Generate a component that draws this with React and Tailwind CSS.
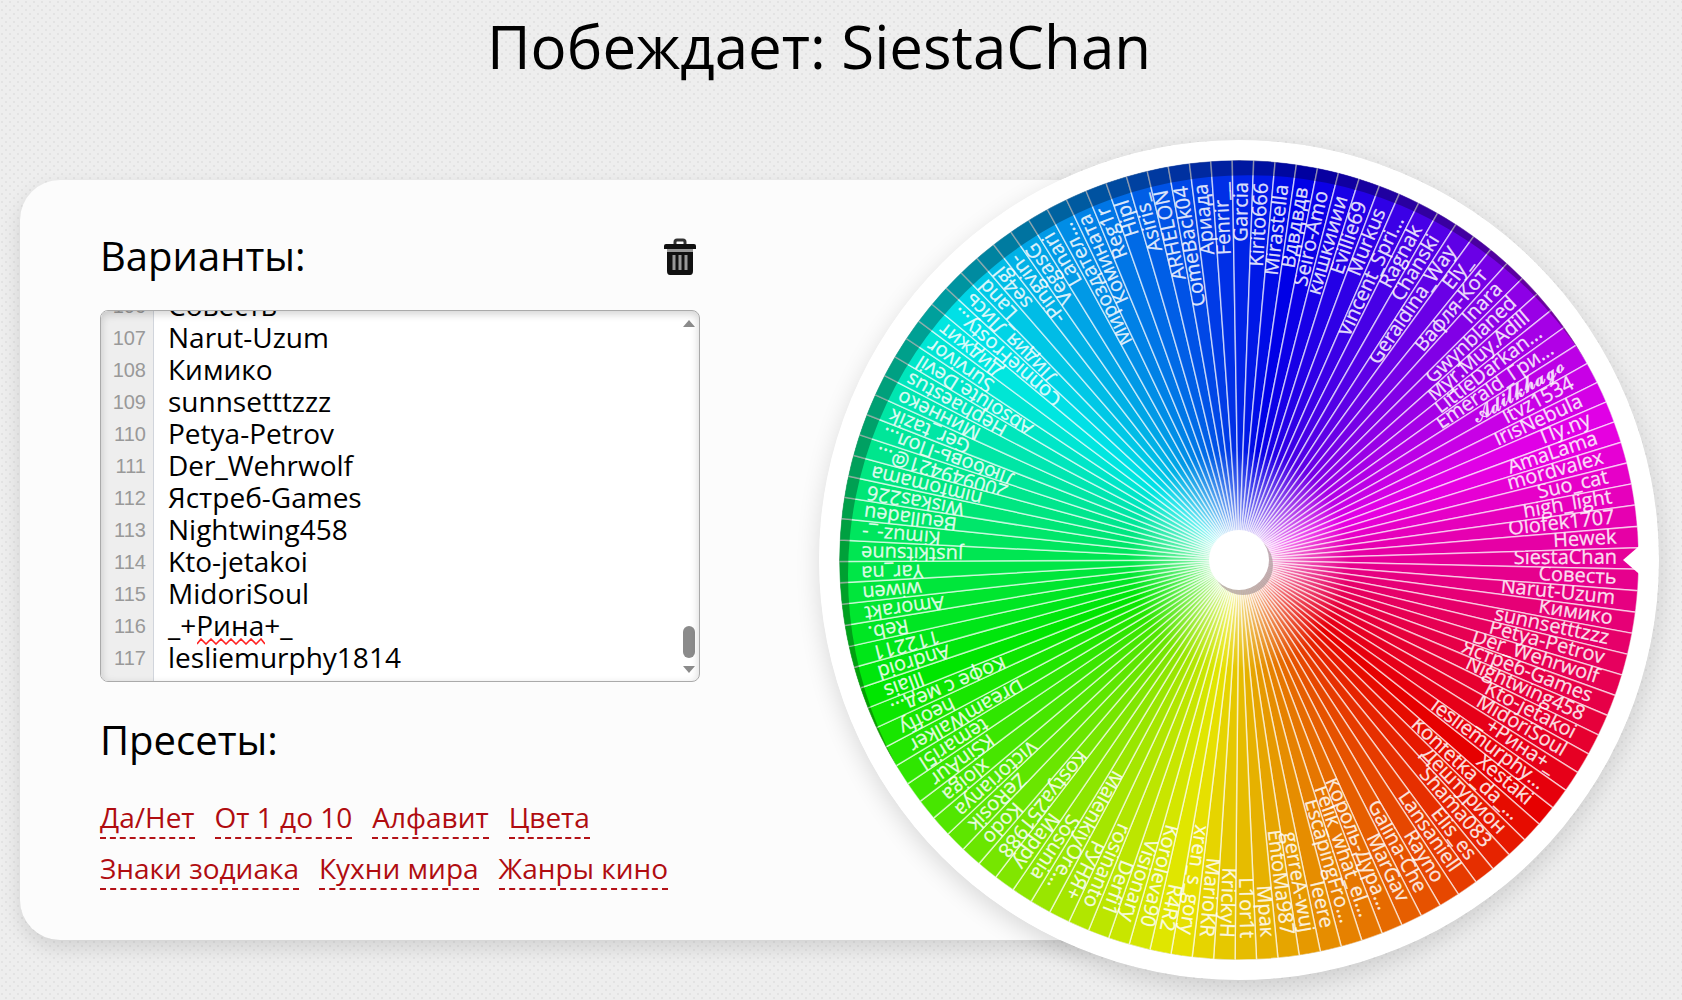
import { useLayoutEffect, useRef, useState } from "react";

const NAMES = [
  "Xestaki", "Konfetka_da_...", "Дештурион", "Shama083", "Elis_es", "Lansaniell", "Rayno",
  "Galina-Che", "MarGav", "Король-Дура...", "Felik_what_el...", "EscapingFro...", "Ieere",
  "gerreA-wuj", "EntoMa987", "Мрак", "L1or1t", "KrickyH", "MarioKR", "xren_s_gory", "R4R2",
  "Koroleva90", "Visionary", "Derfi1", "rosinanto", "РУНЯ+", "MalenkiyOre...", "Sosunia",
  "Mappy", "Kostya251988", "Kodo", "ZeRosik", "Victorianya", "xloiga", "KSinAur", "temari5l",
  "DreamWalker", "heoffy", "Кофе с мед...", "Illais", "Android", "112211", "Reb.", "Amorakt",
  "wiwen", "Yar_na", "justkitsune", "Kimuz-_-", "Beulladeu", "Wiskas226", "nimfomama",
  "200949421@...", "Любовь-Пол...", "Ger_tazik", "Миннеко", "Hephaestus", "Absolute.Devil",
  "Survivor", "Диджит", "ConnieFrosty...", "Лидия_Лись", "Land", "se4gl", "-Pingvin-",
  "VegasG", "Lanari", "Мироздател...", "Комината", "Reg1r", "Hipl", "Asiris_", "ARHELON",
  "ComeBack04", "Ариада", "Fenrir__", "Garcia", "Kirito666", "Mirastella", "Вдвдвдв",
  "Seiro-Amo", "кишкииии", "Evillie69", "Murkus", "Vincent_Spri...", "Ragnak", "Chanski",
  "Geraldina_Way", "Ely_", "Вафля-Кот", "Inara", "Gwynblaned", "Myr.Muy.Adill",
  "LittleDarkan...", "Emerald_Гри...", "𝓐𝓭𝓲𝓵𝓴𝓱𝓪𝓰𝓸", "Itvz1534", "IrisNebula", "Пу.ny",
  "AmaLama", "mordvalex", "Suo_cat", "high_light", "Olofek1707", "Hewek", "SiestaChan",
  "Совесть", "Narut-Uzum", "Кимико", "sunnsetttzzz", "Petya-Petrov", "Der_Wehrwolf",
  "Ястреб-Games", "Nightwing458", "Kto-jetakoi", "MidoriSoul", "_+Рина+_", "lesliemurphy1814",
];

const PRESETS = ["Да/Нет", "От 1 до 10", "Алфавит", "Цвета", "Знаки зодиака", "Кухни мира", "Жанры кино"];

const WINNER = NAMES.indexOf("SiestaChan");
const STEP = 360 / NAMES.length;
const R = 400;
const HALF = (STEP / 2) * (Math.PI / 180);
const EDGE_X = R * Math.cos(HALF);
const EDGE_Y = R * Math.sin(HALF);

const LINE = 32;
const VISIBLE_LINES = 12;

const angleOf = (i) => (i - WINNER) * STEP - 0.2;

const wheelLabel = (name) => {
  const chars = [...name];
  if (chars.length <= 15 || name.endsWith("...")) return name;
  return chars.slice(0, 12).join("") + "...";
};

function Wheel() {
  return (
    <svg viewBox="-420 -420 840 840" className="block w-full rounded-full shadow-[0_8px_24px_rgba(0,0,0,0.14)]">
      <defs>
        <clipPath id="label-area">
          <path d={`M0 0L${EDGE_X} ${-EDGE_Y}V200H0Z`} />
        </clipPath>
        <clipPath id="disc">
          <circle r={R} />
        </clipPath>
        <radialGradient id="glow">
          <stop offset="0.25" stopColor="#fff" stopOpacity="0.6" />
          <stop offset="1" stopColor="#fff" stopOpacity="0" />
        </radialGradient>
      </defs>
      <circle r="420" fill="#fff" />
      {NAMES.map((name, i) => (
        <path
          key={name}
          d={`M0 0L${EDGE_X} ${-EDGE_Y}A${R} ${R} 0 0 1 ${EDGE_X} ${EDGE_Y}Z`}
          transform={`rotate(${angleOf(i)})`}
          fill={`hsl(${(i * 360) / NAMES.length} 100% 45%)`}
          stroke="#fff"
          strokeOpacity="0.6"
          strokeWidth="1.5"
        />
      ))}
      <circle r="110" fill="url(#glow)" />
      {NAMES.map((name, i) => (
        <g key={name} transform={`rotate(${angleOf(i)})`} clipPath="url(#label-area)">
          <text
            x="378"
            y="5"
            textAnchor="end"
            fill="#fff"
            fillOpacity="0.85"
            stroke="#fff"
            strokeOpacity="0.5"
            strokeWidth="0.5"
            className="text-[20px] font-['Open_Sans','Noto_Sans','DejaVu_Serif',sans-serif]"
          >
            {wheelLabel(name)}
          </text>
        </g>
      ))}
      {/* inner shadow cast by the rim */}
      <path
        clipPath="url(#disc)"
        fillRule="evenodd"
        fillOpacity="0.3"
        d="M-400 0A400 400 0 0 1 400 0A400 400 0 0 1 -400 0ZM-391 15A400 400 0 0 1 409 15A400 400 0 0 1 -391 15Z"
      />
      <circle r="401" fill="none" stroke="#fff" strokeWidth="2" />
      <path d="M384 0L406 -19V19Z" fill="#fff" />
      <circle cx="4" cy="5" r="30" fill="#a99" fillOpacity="0.7" />
      <circle r="30" fill="#fff" />
    </svg>
  );
}

function VariantsEditor() {
  const areaRef = useRef(null);
  const [scrollTop, setScrollTop] = useState(0);

  useLayoutEffect(() => {
    areaRef.current.scrollTop = areaRef.current.scrollHeight;
    setScrollTop(areaRef.current.scrollTop);
  }, []);

  // only the numbers of the lines in view are rendered
  const first = Math.floor(scrollTop / LINE);
  const numbers = NAMES.map((_, i) => i + 1).slice(first, first + VISIBLE_LINES);

  return (
    <div className="relative mt-6 flex h-[372px] overflow-hidden rounded-lg border border-[#aaa] bg-white">
      <div className="w-[53px] shrink-0 overflow-hidden border-r border-gray-300 bg-[#eee] pt-px pr-[7px] text-right font-['Liberation_Sans',sans-serif] text-xl leading-8 text-[#999]">
        <div style={{ marginTop: first * LINE - scrollTop }}>
          {numbers.map((n) => (
            <div key={n}>{n}</div>
          ))}
        </div>
      </div>
      <textarea
        id="variants"
        ref={areaRef}
        onScroll={(e) => setScrollTop(e.target.scrollTop)}
        defaultValue={NAMES.join("\n")}
        spellCheck={false}
        wrap="off"
        className="min-w-0 flex-1 resize-none overflow-auto pb-2 pl-[14px] text-[28px] leading-8 outline-none [scrollbar-width:none]"
      />
      <div className="flex w-[21px] flex-col items-center justify-between pt-[9px] pb-2">
        <svg width="12" height="7" viewBox="0 0 12 7">
          <path d="M0 7L6 0L12 7Z" fill="#8b8b8b" />
        </svg>
        <div className="flex flex-col items-center gap-2">
          <div className="h-8 w-3 rounded-full bg-[#8b8b8b]" />
          <svg width="12" height="7" viewBox="0 0 12 7">
            <path d="M0 0L6 7L12 0Z" fill="#8b8b8b" />
          </svg>
        </div>
      </div>
      <div className="pointer-events-none absolute inset-0 rounded-md shadow-[inset_0_3px_8px_rgba(0,0,0,0.18)]" />
      <svg className="pointer-events-none absolute bottom-[36px] left-[96px]" width="68" height="7" viewBox="0 0 68 7">
        <path
          d="M0 6L4 1L9 6L14 1L19 6L24 1L29 6L34 1L39 6L44 1L49 6L54 1L59 6L64 1L68 6"
          fill="none"
          stroke="#f22"
          strokeWidth="1.6"
        />
      </svg>
    </div>
  );
}

function TrashIcon() {
  return (
    <svg width="34" height="38" viewBox="0 0 34 38">
      <path d="M12 7V4Q12 2 14 2H20Q22 2 22 4V7" fill="none" stroke="#333" strokeWidth="3" />
      <path d="M1 8Q1 6 3 6H31Q33 6 33 8V11H1Z" fill="#111" />
      <path d="M4 11H30V14H4Z" fill="#999" />
      <path d="M4 14H30V33Q30 37 27 37H7Q4 37 4 33Z" fill="#111" />
      <path d="M11 17V32M17 17V32M23 17V32" stroke="#999" strokeWidth="3" />
    </svg>
  );
}

export default function App() {
  return (
    <div className="min-h-screen overflow-hidden bg-[#eee] bg-[radial-gradient(circle_at_25%_25%,#e3e3e3_1px,transparent_1.5px),radial-gradient(circle_at_75%_75%,#e3e3e3_1px,transparent_1.5px)] bg-[size:8px_8px] font-['Open_Sans','Noto_Sans',sans-serif] text-black">
      <h1 className="pt-[5px] pr-11 text-center text-6xl leading-[82px]">Побеждает: SiestaChan</h1>
      <main className="mt-[53px] flex items-center pr-[23px] pl-5">
        <section className="h-[760px] min-w-0 flex-1 rounded-l-[40px] bg-[#fcfcfc] pt-[46px] pl-20 shadow-[0_8px_20px_rgba(0,0,0,0.12)]">
          <div className="w-[600px]">
            <div className="flex items-center justify-between pr-[3px]">
              <label htmlFor="variants" className="text-[40px] leading-[60px]">Варианты:</label>
              <button type="button" aria-label="Очистить" className="pt-0.5">
                <TrashIcon />
              </button>
            </div>
            <VariantsEditor />
            <h2 className="mt-7 text-[40px] leading-[60px]">Пресеты:</h2>
            <nav className="mt-8 flex flex-wrap gap-x-5 gap-y-3.5">
              {PRESETS.map((preset) => (
                <a key={preset} href="#" className="border-b-2 border-dashed border-[#b31217] pb-1 text-[28px] leading-[31px] text-[#b00c10]">
                  {preset}
                </a>
              ))}
            </nav>
          </div>
        </section>
        <div className="relative -ml-[440px] w-[840px] shrink-0">
          <Wheel />
        </div>
      </main>
    </div>
  );
}
